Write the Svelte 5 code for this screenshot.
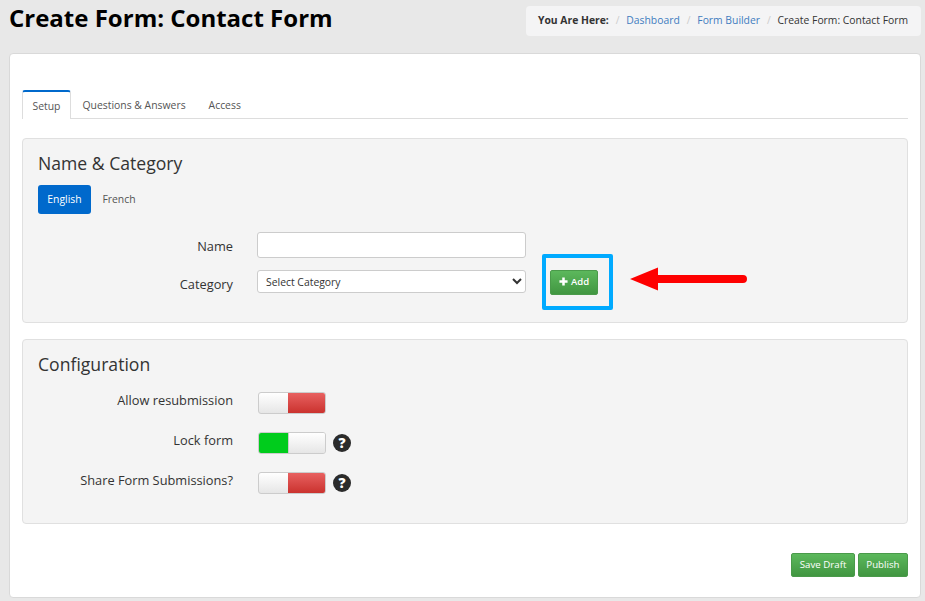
<script>
  const rows = [
    { label: 'Allow resubmission', on: false, help: false },
    { label: 'Lock form', on: true, help: true },
    { label: 'Share Form Submissions?', on: false, help: true }
  ];
</script>

<div class="page">
  <header class="top">
    <h1>Create Form: Contact Form</h1>
    <nav class="crumbs">
      <b>You Are Here:</b><i>/</i><a href="#d">Dashboard</a><i>/</i><a href="#f">Form Builder</a><i>/</i><span>Create Form: Contact Form</span>
    </nav>
  </header>

  <main class="card">
    <div class="tabs">
      <div class="tab active">Setup</div>
      <div class="tab">Questions &amp; Answers</div>
      <div class="tab">Access</div>
    </div>

    <section class="panel first">
      <h2>Name &amp; Category</h2>
      <div class="pills">
        <div class="pill active">English</div>
        <div class="pill">French</div>
      </div>
      <div class="form-row name-row">
        <label class="lbl" for="name">Name</label>
        <input id="name" class="text" type="text" />
      </div>
      <div class="form-row cat-row">
        <label class="lbl" for="cat">Category</label>
        <select id="cat" class="select"><option>Select Category</option></select>
        <div class="add-wrap">
          <button class="btn add">
            <svg viewBox="0 0 10 10" width="9" height="9"><path d="M3.6 0.5h2.8v3.1h3.1v2.8H6.4v3.1H3.6V6.4H0.5V3.6h3.1z" fill="#fff"/></svg>
            Add
          </button>
          <div class="highlight"></div>
          <svg class="arrow" viewBox="0 0 118 26" width="118" height="26">
            <path d="M0 13 L28 1.5 V9 H113 a4 4 0 0 1 0 8 H28 V24.5 Z" fill="#fe0000"/>
          </svg>
        </div>
      </div>
    </section>

    <section class="panel second">
      <h2>Configuration</h2>
      <div class="toggles">
        {#each rows as r}
          <div class="form-row t-row">
            <span class="lbl">{r.label}</span>
            <div class="toggle" class:on={r.on}>
              <span class="left"></span>
              <span class="right"></span>
            </div>
            {#if r.help}
              <span class="help">?</span>
            {/if}
          </div>
        {/each}
      </div>
    </section>

    <div class="actions">
      <button class="btn">Save Draft</button>
      <button class="btn">Publish</button>
    </div>
  </main>
</div>

<style>
  :global(body) {
    margin: 0;
    background: #e8e8e8;
    font-family: "Open Sans", "Liberation Sans", sans-serif;
    color: #333;
  }
  .page {
    width: 925px;
    height: 601px;
    overflow: hidden;
    box-sizing: border-box;
    padding: 6px 4px 0 9px;
  }
  .top {
    display: flex;
    justify-content: space-between;
    align-items: flex-start;
    height: 47px;
  }
  h1 {
    margin: -3px 0 0;
    font-size: 24px;
    line-height: 30px;
    font-weight: 700;
    color: #000;
  }
  .crumbs {
    box-sizing: border-box;
    width: 395px;
    height: 30px;
    background: #f4f4f5;
    border-radius: 4px;
    padding: 0 12px 2px;
    display: flex;
    align-items: center;
    font-size: 10.35px;
    white-space: nowrap;
  }
  .crumbs b { font-weight: 700; color: #333; }
  .crumbs i { font-style: normal; color: #ccc; margin: 0 6.9px; }
  .crumbs a { color: #3f7cbf; text-decoration: none; }
  .crumbs span { color: #333; }
  .card {
    box-sizing: border-box;
    width: 912px;
    height: 545px;
    background: #fff;
    border: 1px solid #d9d9d9;
    border-radius: 4px;
    padding: 36px 12px 0 12px;
  }
  .tabs {
    display: flex;
    height: 28px;
    border-bottom: 1px solid #ddd;
    font-size: 10.4px;
  }
  .tab {
    height: 28px;
    padding: 0 11.5px;
    line-height: 31px;
    color: #555;
  }
  .tab.active {
    box-sizing: border-box;
    height: 29px;
    width: 49px;
    padding: 0;
    text-align: center;
    background: #fff;
    border: 1px solid #ddd;
    border-top: 2px solid #0069cc;
    border-bottom: none;
    border-radius: 3px 3px 0 0;
    line-height: 29px;
  }
  .panel {
    box-sizing: border-box;
    background: #f4f4f4;
    border: 1px solid #e0e0e0;
    border-radius: 4px;
    padding: 0 15px;
  }
  .panel.first { margin-top: 19px; height: 185px; }
  .panel.second { margin-top: 16px; height: 185px; }
  h2 {
    margin: 0;
    font-size: 17.6px;
    font-weight: 400;
    line-height: 24px;
    color: #333;
    padding-top: 12px;
  }
  .pills {
    display: flex;
    margin-top: 10px;
    font-size: 10.4px;
  }
  .pill {
    height: 29px;
    line-height: 29px;
    width: 56px;
    text-align: center;
    color: #555;
    border-radius: 3px;
  }
  .pill.active {
    width: 53px;
    background: #0069cc;
    color: #fff;
  }
  .form-row {
    display: flex;
    align-items: center;
  }
  .lbl {
    width: 195px;
    flex: none;
    text-align: right;
    font-size: 12.8px;
    color: #333;
    margin-right: 24px;
  }
  .name-row { margin-top: 18px; height: 26px; }
  .name-row .lbl { padding-top: 2px; }
  .cat-row { margin-top: 12px; height: 25px; }
  .cat-row .lbl { padding-top: 3px; }
  .t-row .lbl { padding-bottom: 6px; }
  .text {
    box-sizing: border-box;
    width: 269px;
    height: 26px;
    background: #fff;
    border: 1px solid #ccc;
    border-radius: 3px;
    margin: 0;
  }
  .select {
    box-sizing: border-box;
    width: 269px;
    height: 23px;
    margin: 0 0 2px;
    background: #fff;
    border: 1px solid #ccc;
    border-radius: 3px;
    font-family: inherit;
    font-size: 10.4px;
    color: #333;
    padding: 0 4px;
  }
  .add-wrap {
    position: relative;
    margin-left: 24px;
    display: flex;
  }
  .btn {
    box-sizing: border-box;
    height: 24px;
    padding: 0 7.5px 2px;
    border: 1px solid #4a9a4a;
    border-radius: 2px;
    background: linear-gradient(#5cb85c, #419641);
    color: #fff;
    font-family: inherit;
    font-size: 9.7px;
    font-weight: 400;
    display: inline-flex;
    align-items: center;
    gap: 3px;
  }
  .btn.add {
    width: 48px;
    height: 25px;
    padding: 0 0 2px;
    justify-content: center;
    font-weight: 600;
    font-size: 9.5px;
  }
  .highlight {
    position: absolute;
    left: -8px;
    top: -16px;
    width: 71px;
    height: 56px;
    box-sizing: border-box;
    border: 4px solid #00aaff;
    border-radius: 2px;
  }
  .arrow {
    position: absolute;
    left: 80px;
    top: -4px;
  }
  .toggles { margin-top: 16px; }
  .t-row { height: 22px; margin-bottom: 18px; }
  .toggle {
    display: flex;
    width: 68px;
    height: 22px;
    box-sizing: border-box;
    border-radius: 3px;
    overflow: hidden;
    border: 1px solid #ccc;
    margin-left: 1px;
    background: linear-gradient(#fff, #e6e6e6);
  }
  .toggle .left { width: 30px; flex: none; }
  .toggle .right {
    flex: 1;
    background: linear-gradient(#e96363, #c9302c);
    margin: -1px;
  }
  .toggle.on .left {
    background: #00cc1c;
    margin: -1px 0 -1px -1px;
    width: 30px;
  }
  .toggle.on .right {
    background: linear-gradient(#fff, #e6e6e6);
    margin: 0;
    border-left: 1px solid #ccc;
  }
  .help {
    width: 18px;
    height: 18px;
    border-radius: 50%;
    background: #2b2b2b;
    color: #fff;
    font-size: 14px;
    font-weight: 800;
    line-height: 18px;
    text-align: center;
    margin-left: 7px;
  }
  .actions {
    display: flex;
    justify-content: flex-end;
    gap: 3px;
    margin-top: 29px;
  }
</style>
